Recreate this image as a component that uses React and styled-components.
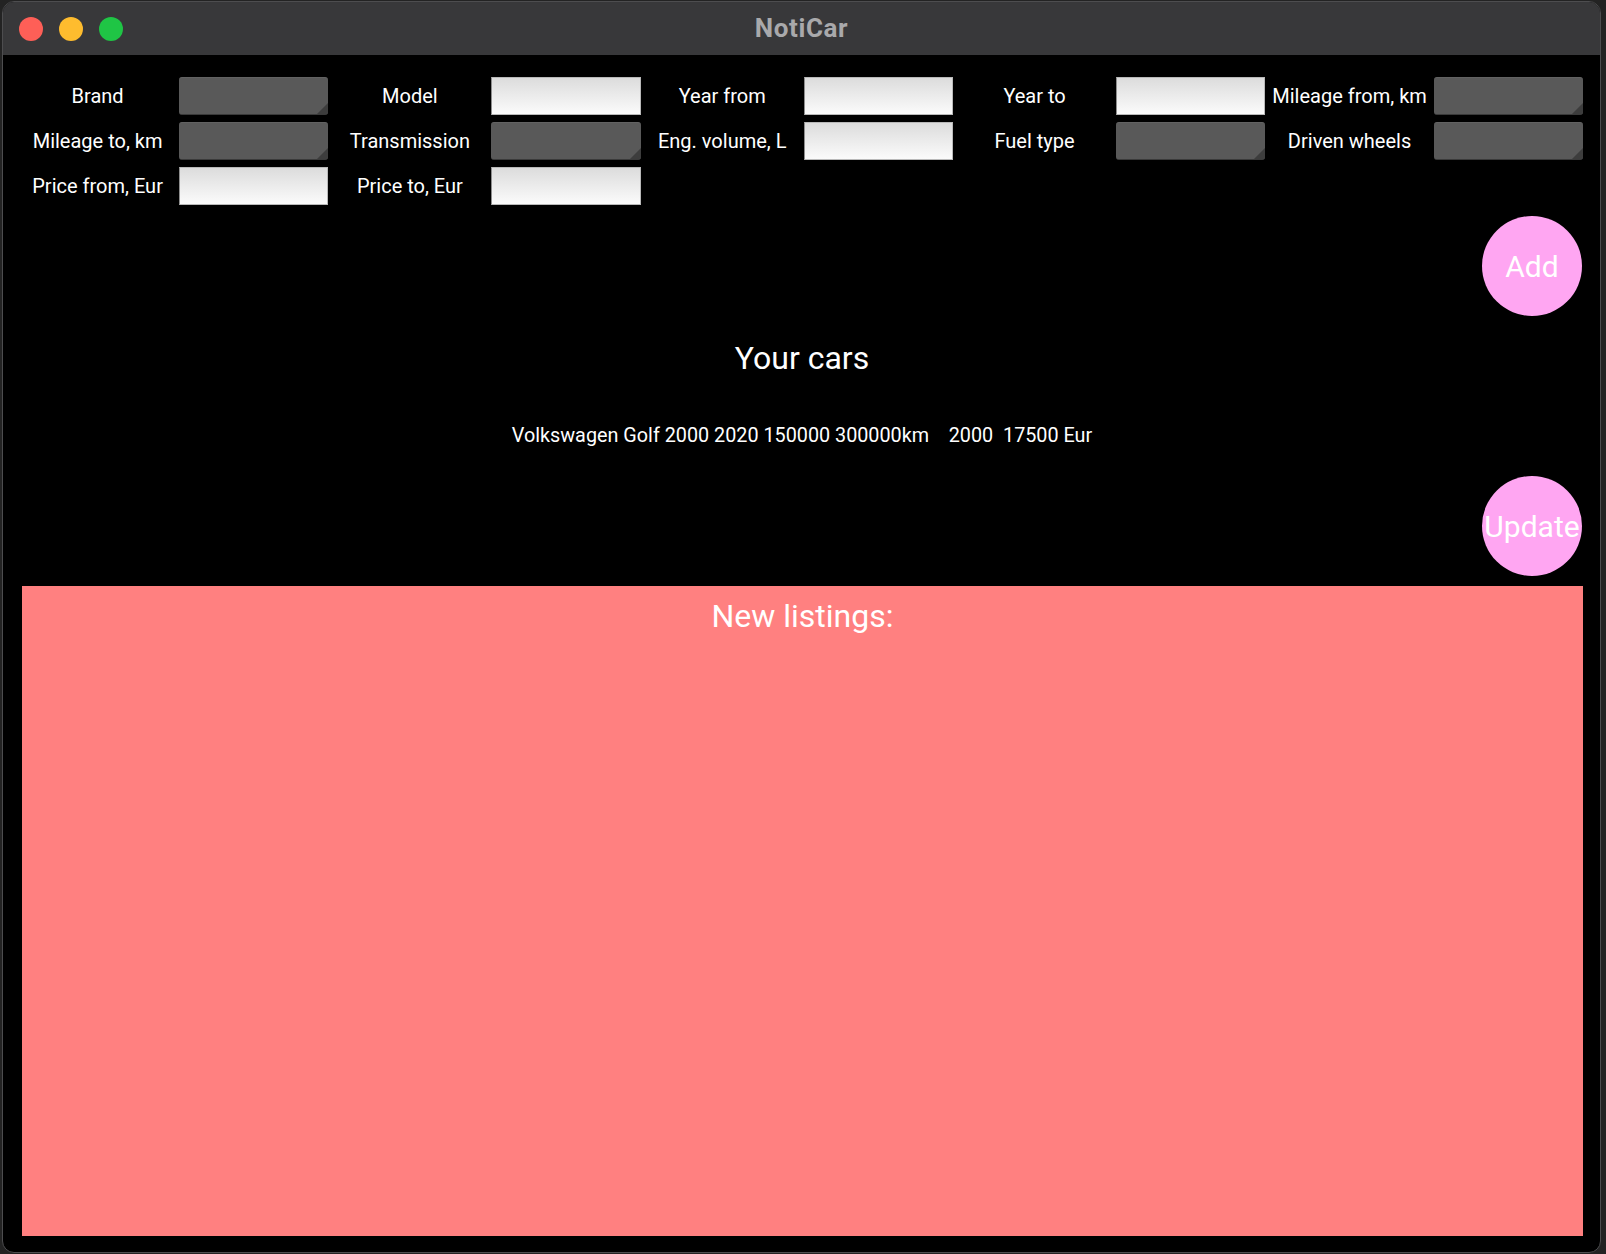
import styled, { createGlobalStyle } from "styled-components";

const GlobalStyle = createGlobalStyle`
  html, body {
    margin: 0;
    padding: 0;
    background: #232323;
  }
  body {
    font-family: Roboto, "Liberation Sans", sans-serif;
  }
  * {
    box-sizing: border-box;
  }
`;

const fields = [
  { label: "Brand", kind: "spinner" },
  { label: "Model", kind: "text" },
  { label: "Year from", kind: "text" },
  { label: "Year to", kind: "text" },
  { label: "Mileage from, km", kind: "spinner" },
  { label: "Mileage to, km", kind: "spinner" },
  { label: "Transmission", kind: "spinner" },
  { label: "Eng. volume, L", kind: "text" },
  { label: "Fuel type", kind: "spinner" },
  { label: "Driven wheels", kind: "spinner" },
  { label: "Price from, Eur", kind: "text" },
  { label: "Price to, Eur", kind: "text" },
];

const lights = ["#fe5f57", "#febc2e", "#1fc545"];

export default function App() {
  return (
    <>
      <GlobalStyle />
      <Window>
        <TitleBar>
          <Lights>
            {lights.map((c) => (
              <Light key={c} color={c} />
            ))}
          </Lights>
          <Title>NotiCar</Title>
          <span />
        </TitleBar>
        <Content>
          <FormGrid>
            {fields.map((f) => (
              <Field key={f.label} f={f} />
            ))}
          </FormGrid>
          <RoundButton>Add</RoundButton>
          <Heading>Your cars</Heading>
          <CarLine>
            {"Volkswagen Golf 2000 2020 150000 300000km    2000  17500 Eur"}
          </CarLine>
          <RoundButton $top={28}>Update</RoundButton>
          <Listings>
            <Heading $plain>New listings:</Heading>
          </Listings>
        </Content>
      </Window>
    </>
  );
}

function Field({ f }) {
  return (
    <>
      <Label>{f.label}</Label>
      {f.kind === "spinner" ? <Spinner type="button" /> : <TextBox type="text" />}
    </>
  );
}

const Window = styled.div`
  margin: 1px 0 0 2px;
  width: 1599px;
  height: 1252px;
  background: #000;
  border: 1px solid #4d4d4f;
  border-radius: 12px;
  overflow: hidden;
  display: flex;
  flex-direction: column;
`;

const TitleBar = styled.div`
  height: 53px;
  flex-shrink: 0;
  background: #38383a;
  display: grid;
  grid-template-columns: 1fr auto 1fr;
  align-items: center;
`;

const Lights = styled.div`
  display: flex;
  gap: 16px;
  padding-left: 16px;
`;

const Light = styled.span`
  width: 24px;
  height: 24px;
  border-radius: 50%;
  background: ${(p) => p.color};
`;

const Title = styled.div`
  color: #a9a9ab;
  font-family: Roboto, "Liberation Sans", sans-serif;
  font-weight: 700;
  font-size: 26px;
  letter-spacing: 0.6px;
  margin-top: -2px;
`;

const Content = styled.div`
  flex: 1;
  display: flex;
  flex-direction: column;
  padding: 22px 18px 0 19px;
`;

const FormGrid = styled.div`
  width: 1560px;
  margin-left: 1px;
  display: grid;
  grid-template-columns: repeat(10, 1fr);
  grid-auto-rows: 38px;
  column-gap: 7px;
  row-gap: 7px;
`;

const Label = styled.div`
  color: #fff;
  font-size: 20px;
  line-height: 38px;
  text-align: center;
  white-space: nowrap;
  display: flex;
  justify-content: center;
`;

const Spinner = styled.button`
  position: relative;
  margin: 0;
  padding: 0;
  width: 100%;
  height: 38px;
  background: #595959;
  border: none;
  border-top: 1px solid #626262;
  border-bottom: 1px solid #3a3a3a;
  border-radius: 3px;
  overflow: hidden;
  &::after {
    content: "";
    position: absolute;
    right: 0;
    bottom: 0;
    border-left: 11px solid transparent;
    border-bottom: 11px solid #3d3d3d;
  }
`;

const TextBox = styled.input`
  margin: 0;
  width: 100%;
  height: 38px;
  border: 1px solid #b9b9b9;
  border-left-color: #8d8d8d;
  background: linear-gradient(#dcdcdc, #fbfbfb);
  outline: none;
`;

const RoundButton = styled.button`
  align-self: flex-end;
  margin-top: ${(p) => p.$top ?? 11}px;
  width: 100px;
  height: 100px;
  border: none;
  border-radius: 50%;
  background: #ffa6f2;
  color: #fff;
  font-family: Roboto, "Liberation Sans", sans-serif;
  font-size: 30px;
  padding: 0;
  display: flex;
  align-items: center;
  justify-content: center;
  white-space: nowrap;
  overflow: visible;
`;

const Heading = styled.div`
  margin-top: ${(p) => (p.$plain ? 0 : 24)}px;
  color: #fff;
  font-size: 32px;
  line-height: 36px;
  text-align: center;
`;

const CarLine = styled.div`
  margin-top: 48px;
  color: #fff;
  font-size: 19.8px;
  line-height: 24px;
  text-align: center;
  white-space: pre;
`;

const Listings = styled.div`
  margin-top: 10px;
  width: 1561px;
  height: 650px;
  background: #ff8080;
  padding-top: 12px;
`;
